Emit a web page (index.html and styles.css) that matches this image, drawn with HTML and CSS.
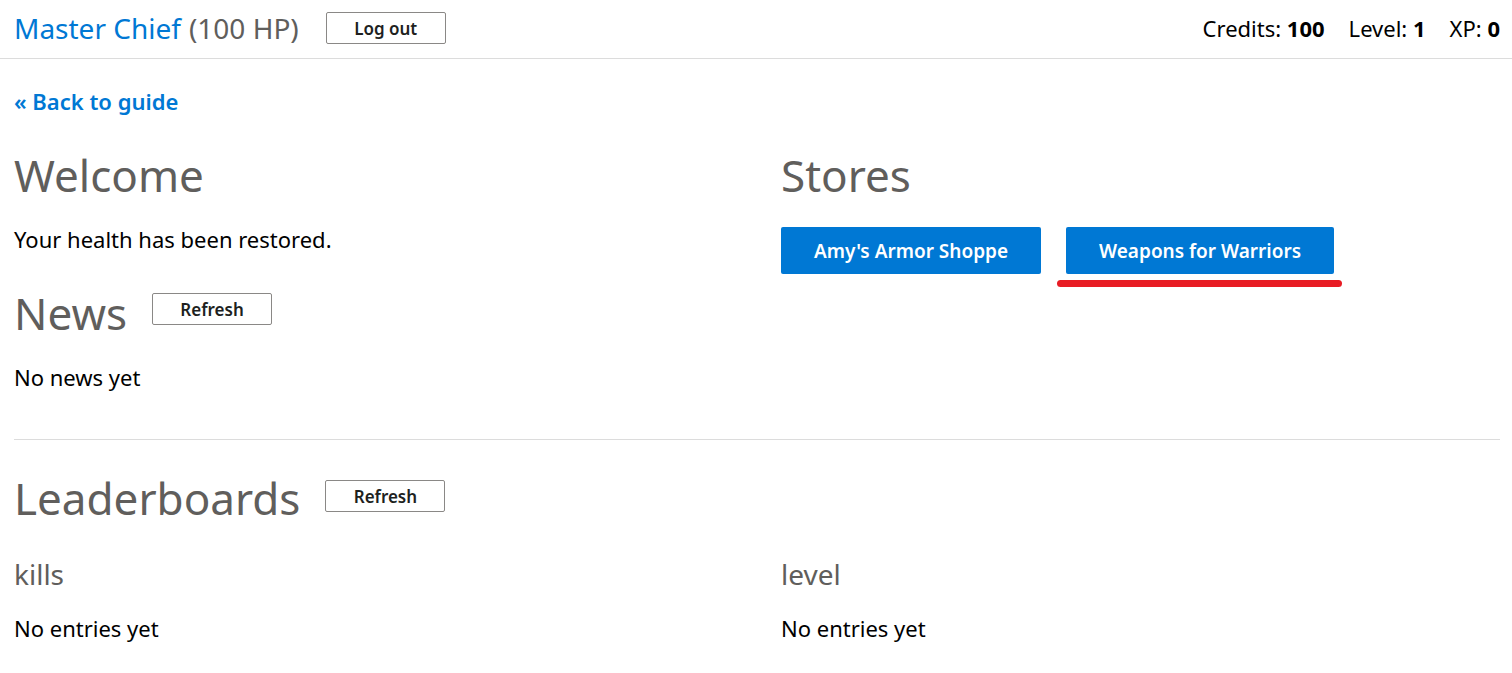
FILE: index.html
```html
<!DOCTYPE html>
<html lang="en">
<head>
<meta charset="utf-8">
<title>Master Chief</title>
<link rel="stylesheet" href="styles.css">
</head>
<body>
<header class="topbar">
  <div class="player">
    <span class="player-name">Master Chief</span>
    <span class="player-hp">(100 HP)</span>
    <button class="btn btn-outline btn-logout">Log out</button>
  </div>
  <div class="stats">
    <span class="stat">Credits: <b>100</b></span>
    <span class="stat">Level: <b>1</b></span>
    <span class="stat">XP: <b>0</b></span>
  </div>
</header>
<main class="content">
  <a class="back-link" href="#">« Back to guide</a>
  <section class="row top-row">
    <div class="col">
      <h1 class="heading">Welcome</h1>
      <p class="text welcome-text">Your health has been restored.</p>
      <div class="heading-row news-row">
        <h1 class="heading">News</h1>
        <button class="btn btn-outline">Refresh</button>
      </div>
      <p class="text news-text">No news yet</p>
    </div>
    <div class="col">
      <h1 class="heading">Stores</h1>
      <div class="stores">
        <button class="btn btn-primary">Amy's Armor Shoppe</button>
        <span class="marked">
          <button class="btn btn-primary">Weapons for Warriors</button>
          <span class="mark"></span>
        </span>
      </div>
    </div>
  </section>
  <hr class="divider">
  <section class="leaderboards">
    <div class="heading-row lb-row">
      <h1 class="heading">Leaderboards</h1>
      <button class="btn btn-outline">Refresh</button>
    </div>
    <div class="row">
      <div class="col">
        <h2 class="subheading">kills</h2>
        <p class="text entry-text">No entries yet</p>
      </div>
      <div class="col">
        <h2 class="subheading">level</h2>
        <p class="text entry-text">No entries yet</p>
      </div>
    </div>
  </section>
</main>
</body>
</html>
```

FILE: styles.css
```css
* { box-sizing: border-box; }
body {
  margin: 0;
  font-family: "Noto Sans", "Open Sans", sans-serif;
  color: #000;
  background: #fff;
}
.topbar {
  height: 59px;
  border-bottom: 1px solid #dcdcdc;
  display: flex;
  justify-content: space-between;
  align-items: center;
  padding: 0 12px 2px 14px;
}
.player { display: flex; align-items: center; }
.player-name { color: #0078d4; font-size: 28px; }
.player-hp { color: #605e5c; font-size: 28px; margin-left: 8px; }
.btn {
  font-family: inherit;
  cursor: pointer;
  border-radius: 2px;
}
.btn-outline {
  background: #fff;
  border: 1px solid #8a8886;
  color: #201f1e;
  font-weight: 600;
  font-size: 17px;
  width: 120px;
  height: 32px;
  padding: 0;
}
.btn-logout { margin-left: 27px; }
.stats { display: flex; gap: 24px; font-size: 22px; }
.stat b { font-weight: 700; }
.content { padding: 0 12px 0 14px; }
.back-link {
  display: inline-block;
  margin-top: 27px;
  color: #0078d4;
  font-weight: 600;
  font-size: 22px;
  line-height: 30px;
  text-decoration: none;
}
.row {
  display: grid;
  grid-template-columns: 1fr 1fr;
  column-gap: 48px;
}
.top-row { margin-top: 29px; }
.heading {
  margin: 0;
  font-weight: 400;
  font-size: 44px;
  color: #605e5c;
  line-height: 60px;
}
.text { margin: 0; font-size: 22px; line-height: 30px; }
.welcome-text { margin-top: 19px; }
.heading-row { display: flex; align-items: center; gap: 25px; }
.news-row { margin-top: 29px; }
.news-row .btn { margin-top: -8px; }
.news-text { margin-top: 19px; }
.stores { display: flex; gap: 25px; margin-top: 22px; }
.btn-primary {
  background: #0078d4;
  border: none;
  color: #fff;
  font-weight: 600;
  font-size: 19px;
  height: 47px;
  padding: 0 33px;
}
.marked { position: relative; display: inline-flex; }
.mark {
  position: absolute;
  left: -9px;
  right: -8px;
  top: 53px;
  height: 7px;
  border-radius: 4px;
  background: #e81c24;
}
.divider {
  border: none;
  border-top: 1px solid #dcdcdc;
  margin: 47px 0 0;
}
.lb-row { margin-top: 28px; }
.lb-row .btn { margin-top: -4px; }
.subheading {
  margin: 26px 0 0;
  font-weight: 400;
  font-size: 28px;
  color: #605e5c;
  line-height: 40px;
}
.entry-text { margin-top: 19px; }
```
